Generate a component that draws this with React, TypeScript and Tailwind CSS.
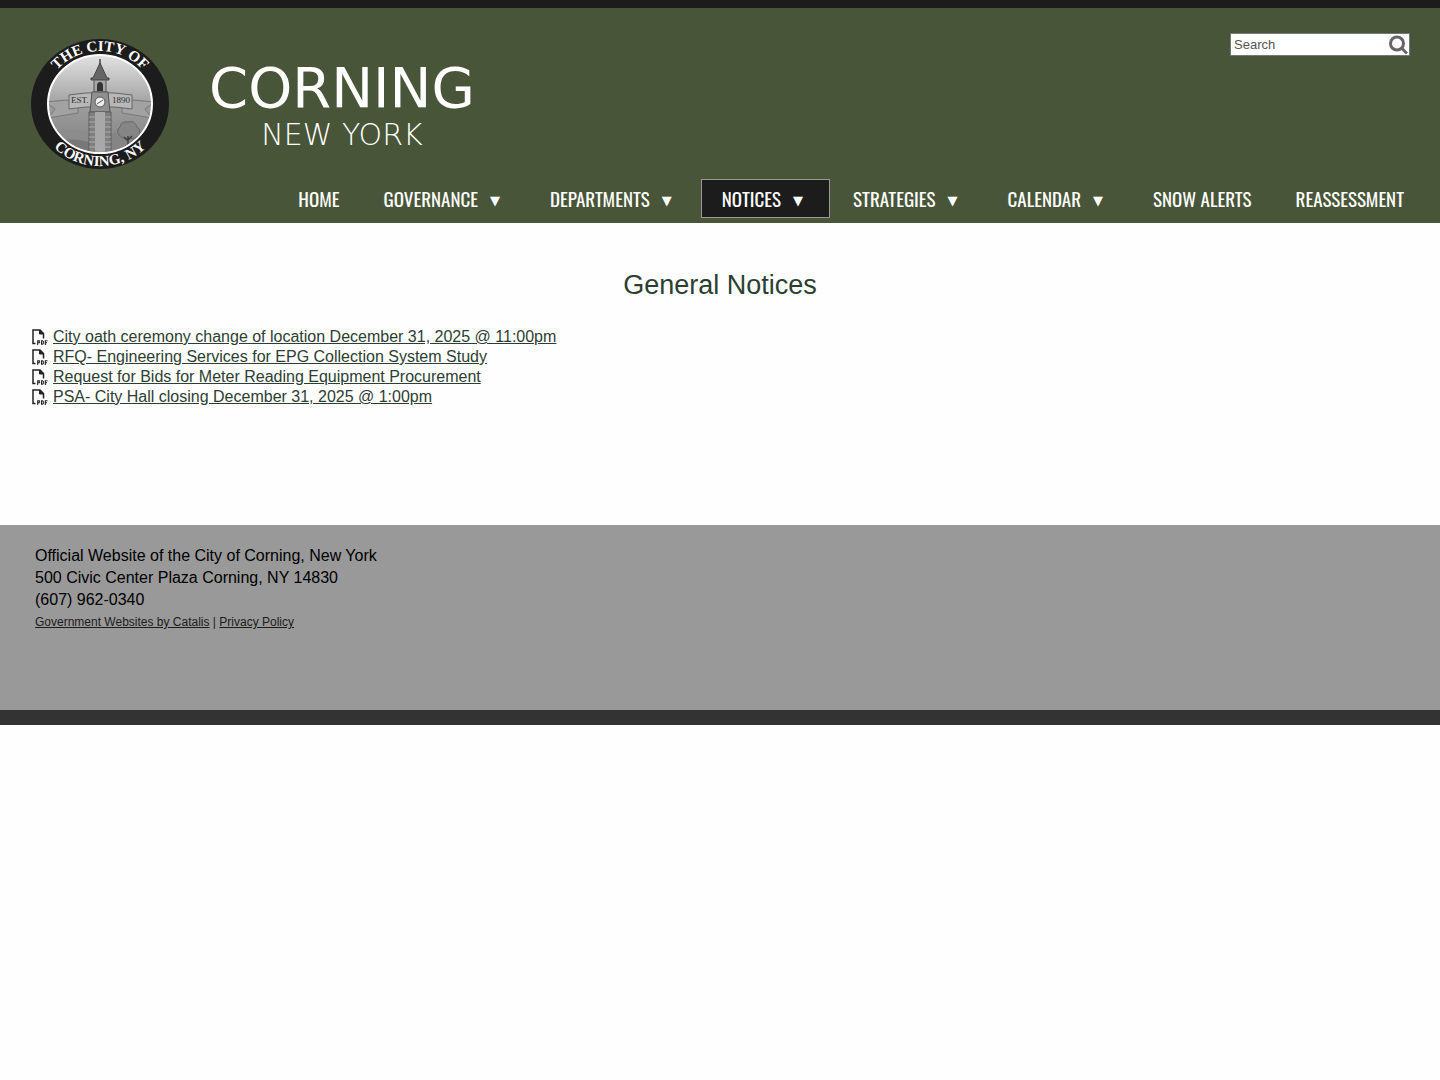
import { useState } from 'react'

const navItems = [
  { label: 'HOME' },
  { label: 'GOVERNANCE', menu: true },
  { label: 'DEPARTMENTS', menu: true },
  { label: 'NOTICES', menu: true, active: true },
  { label: 'STRATEGIES', menu: true },
  { label: 'CALENDAR', menu: true },
  { label: 'SNOW ALERTS' },
  { label: 'REASSESSMENT' },
]

const notices = [
  'City oath ceremony change of location December 31, 2025 @ 11:00pm',
  'RFQ- Engineering Services for EPG Collection System Study',
  'Request for Bids for Meter Reading Equipment Procurement',
  'PSA- City Hall closing December 31, 2025 @ 1:00pm',
]

function Seal() {
  return (
    <svg className="h-[132px] w-[140px] shrink-0" viewBox="0 0 140 132" role="img" aria-label="City of Corning seal">
      <defs>
        <linearGradient id="sky" x1="0" y1="0" x2="0" y2="1">
          <stop offset="0" stopColor="#e2e2e2" />
          <stop offset="0.55" stopColor="#9b9b9b" />
          <stop offset="1" stopColor="#808080" />
        </linearGradient>
        <clipPath id="disc">
          <ellipse cx="70" cy="66" rx="51" ry="48" />
        </clipPath>
        <path id="arcTop" d="M14 66A56 53 0 0 1 126 66" />
        <path id="arcBottom" d="M5 66A65 62 0 0 0 135 66" />
      </defs>
      <ellipse cx="70" cy="66" rx="69" ry="65" fill="#1c1c1c" />
      <ellipse cx="70" cy="66" rx="52" ry="49" fill="url(#sky)" stroke="#fff" strokeWidth="2" />
      <g clipPath="url(#disc)">
        {/* hills */}
        <path d="M15 96Q35 88 60 94V125H15Z" fill="#8c8c8c" />
        <path d="M80 96Q100 90 125 96V125H80Z" fill="#858585" />
        <path d="M15 106Q40 98 60 104V125H15Z" fill="#787878" />
        {/* tree */}
        <path d="M90 98q-5-5 0-9q1-6 8-5q7-2 9 5q6 5 0 10q-4 3-8 1q-5 2-9-2Z" fill="#858585" stroke="#606060" strokeWidth="0.800" />
        <path d="M98 108V98M98 102l4-4M98 103l-4-4M95 108h7" stroke="#3a3a3a" strokeWidth="1.300" fill="none" />
        {/* ribbon */}
        <path d="M37 62L15 64L25 71L18 80L48 75V70Z" fill="#a2a2a2" stroke="#6e6e6e" strokeWidth="0.800" />
        <path d="M103 62L125 64L115 71L122 80L92 75V70Z" fill="#a2a2a2" stroke="#6e6e6e" strokeWidth="0.800" />
        <path d="M39 57Q70 52 102 57V71Q70 66 39 71Z" fill="#b8b8b8" stroke="#666" strokeWidth="1" />
        {/* clock tower */}
        <path d="M70 21V28" stroke="#444" strokeWidth="1.500" />
        <path d="M70 25L77 40H79V42H61V40H63Z" fill="#666" stroke="#444" />
        <path d="M64 42H76V54H64Z" fill="#a7a7a7" stroke="#555" />
        <path d="M67 53V48a3 4 0 0 1 6 0V53Z" fill="#333" />
        <path d="M62 54H78L80 74H60Z" fill="#909090" stroke="#555" />
        <path d="M59 74H81V120H59Z" fill="#808080" stroke="#5c5c5c" />
        <path d="M65 74H75V120H65Z" fill="#a8a8a8" />
        <path d="M59 79H65M59 84H65M59 89H65M59 94H65M59 99H65M59 104H65M59 109H65M75 79H81M75 84H81M75 89H81M75 94H81M75 99H81M75 104H81M75 109H81" stroke="#aaa" strokeWidth="1" />
        <circle cx="70" cy="64" r="5" fill="#eee" stroke="#555" strokeWidth="1" />
        <path d="M67 66L73 62" stroke="#555" />
      </g>
      <g fill="#2f2f2f" fontFamily="Liberation Serif, serif" fontSize="9">
        <text x="41" y="65">EST.</text>
        <text x="82" y="65">1890</text>
      </g>
      <g fill="#fff" fontFamily="Liberation Serif, serif" fontSize="15" fontWeight="700" textAnchor="middle">
        <text><textPath href="#arcTop" startOffset="50%">THE CITY OF</textPath></text>
        <text><textPath href="#arcBottom" startOffset="50%">CORNING, NY</textPath></text>
      </g>
    </svg>
  )
}

function PdfIcon() {
  return (
    <svg className="size-4 shrink-0" viewBox="0 0 16 16" fill="none" stroke="#222" aria-hidden="true">
      <path d="M3.500 14.500H1V1H8L11.500 4.500V9.500" strokeWidth="1.500" />
      <path d="M7.500 1V5H11.500Z" fill="#222" />
      <path d="M5.700 16V11.700H7.300V13.700H5.700M9.500 11.700V15.300H10.500L11.300 14.500V12.500L10.500 11.700ZM13.300 16V11.700H15.500M13.300 13.700H15" strokeWidth="1.100" />
    </svg>
  )
}

function SearchBox() {
  const [query, setQuery] = useState('')

  return (
    <form className="flex h-[23px] w-[180px] items-center border border-[#777] bg-white" onSubmit={(e) => e.preventDefault()}>
      <input
        aria-label="Search"
        value={query}
        onChange={(e) => setQuery(e.target.value)}
        placeholder="Search"
        className="min-w-0 flex-1 pl-[3px] text-[13px] text-[#444] outline-none placeholder:text-[#555]"
      />
      <button type="submit" aria-label="Submit search" className="mr-px">
        <svg className="size-5" viewBox="0 0 20 20" fill="none" stroke="#666" strokeWidth="3">
          <circle cx="9" cy="8.500" r="6.500" />
          <path d="M13.500 13L19 18.500" />
        </svg>
      </button>
    </form>
  )
}

export default function App() {
  return (
    <div className="min-h-screen bg-[#fefefe] font-['Liberation_Sans',Arial,sans-serif] text-base text-black">
      <header className="border-t-8 border-[#1c1c1c] bg-[#485538]">
        <div className="flex items-start justify-between px-[30px] pt-[25px]">
          <a href="#" className="mt-[5px] flex gap-5">
            <Seal />
            <span className="flex w-[304px] flex-col items-center pt-[22px] font-['DejaVu_Sans',sans-serif] text-white">
              <span className="text-[56px] leading-[56px]">CORNING</span>
              <span className="text-[30px] leading-[38px] font-extralight">NEW YORK</span>
            </span>
          </a>
          <SearchBox />
        </div>

        <nav className="mt-[9px] flex justify-end gap-[2px] pr-[15px] pb-[5px]">
          {navItems.map((item) => (
            <a
              key={item.label}
              href="#"
              className={`flex h-[39px] items-center border pl-5 font-['Oswald','Liberation_Sans_Narrow',sans-serif] text-[19px] whitespace-nowrap text-white ${
                item.active ? 'border-[#999] bg-[#1c1c1c]' : 'border-transparent'
              } ${item.menu ? 'pr-[26px]' : 'pr-5'}`}
            >
              {item.label}
              {item.menu && <span className="ml-3 pt-1 font-['DejaVu_Sans'] text-[13px]">▼</span>}
            </a>
          ))}
        </nav>
      </header>

      <main className="px-8 pt-[46px] pb-[118px] text-[#2c4032]">
        <h1 className="text-center text-[27px] leading-8">General Notices</h1>
        <ul className="mt-[26px]">
          {notices.map((title) => (
            <li key={title} className="flex h-5 items-center gap-[5px]">
              <PdfIcon />
              <a href="#" className="leading-5 underline">{title}</a>
            </li>
          ))}
        </ul>
      </main>

      <footer className="border-b-[15px] border-[#333] bg-[#999] px-[35px] pt-[20px] pb-[77px]">
        <p className="leading-[22px]">Official Website of the City of Corning, New York</p>
        <p className="leading-[22px]">500 Civic Center Plaza Corning, NY 14830</p>
        <p className="leading-[22px]">(607) 962-0340</p>
        <p className="text-xs leading-[22px] text-[#1c1c1c]">
          <a href="#" className="underline">Government Websites by Catalis</a> | <a href="#" className="underline">Privacy Policy</a>
        </p>
      </footer>
    </div>
  )
}
